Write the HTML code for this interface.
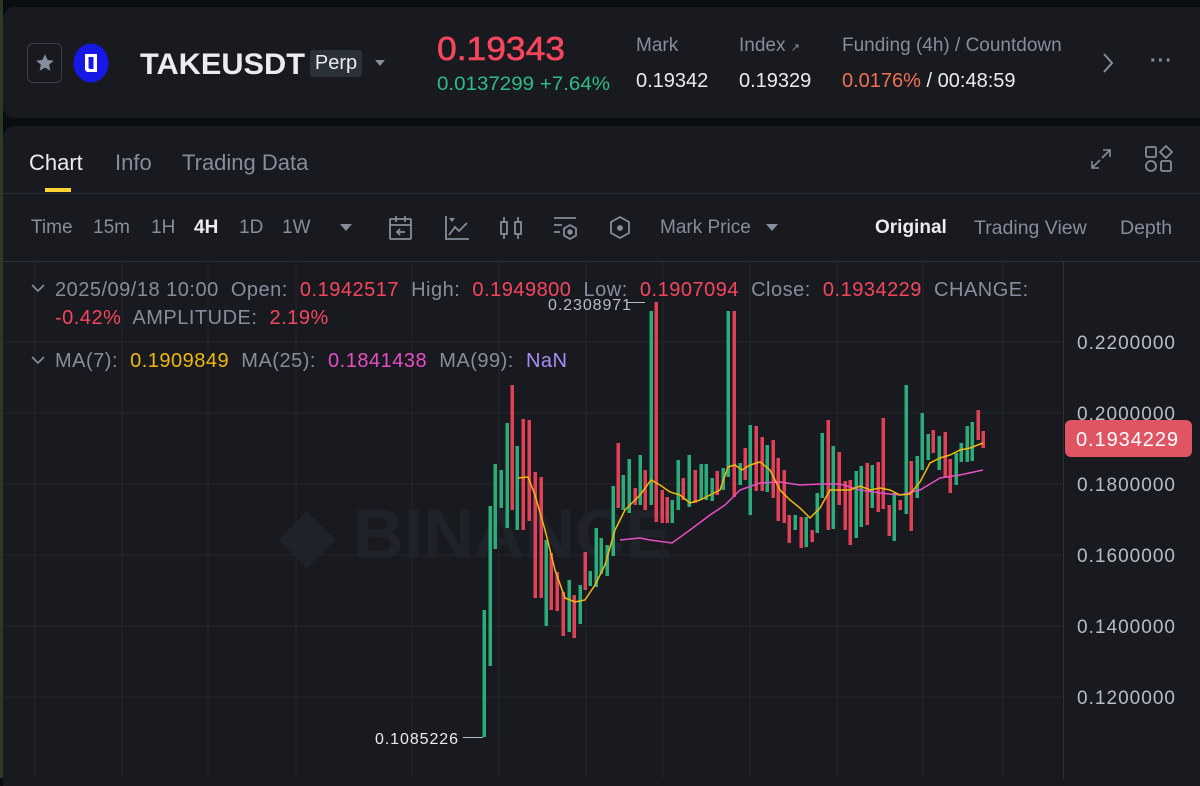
<!DOCTYPE html>
<html><head><meta charset="utf-8">
<style>
*{margin:0;padding:0;box-sizing:border-box}
body{width:1200px;height:778px;background:#0b0e11;font-family:"Liberation Sans",sans-serif;overflow:hidden;position:relative;color:#eaecef}
.p{position:absolute;white-space:nowrap}
.g{color:#848e9c}
.r{color:#f6465d}
.gr{color:#2ebd85}
.ln{font-size:20px;letter-spacing:0.5px}
</style></head><body>
<div class="p" style="left:0;top:0;width:3px;height:778px;background:#2a3a25"></div>
<div class="p" style="left:3px;top:7px;width:1197px;height:111px;background:#181a20;border-radius:12px 0 0 12px"></div>
<div class="p" style="left:3px;top:126px;width:1197px;height:660px;background:#181a20;border-radius:12px 0 0 0"></div>

<!-- header -->
<div class="p" style="left:27px;top:43px;width:35px;height:40px;border:1.5px solid #3a3f48;border-radius:6px"></div>
<svg class="p" style="left:34px;top:52px" width="22" height="22" viewBox="0 0 24 24"><path d="M12 2.5l2.9 6.2 6.6.7-5 4.5 1.4 6.6L12 17.1l-5.9 3.4 1.4-6.6-5-4.5 6.6-.7z" fill="#848e9c"/></svg>
<svg class="p" style="left:73px;top:43px" width="36" height="40" viewBox="0 0 36 40"><ellipse cx="18" cy="20" rx="17.5" ry="19.5" fill="#1717e6"/><path d="M12 11h12v18H14l-2-2z" fill="#fff"/><path d="M15.5 14h5v12h-4l-1-1z" fill="#1717e6"/></svg>
<svg class="p" style="left:0;top:0" width="700" height="110">
<text x="140" y="74" font-size="30" font-weight="bold" fill="#eaecef" textLength="165" lengthAdjust="spacingAndGlyphs" font-family="Liberation Sans,sans-serif">TAKEUSDT</text>
<text x="437" y="60" font-size="33" fill="#f6465d" stroke="#f6465d" stroke-width="0.6" textLength="128" lengthAdjust="spacingAndGlyphs" font-family="Liberation Sans,sans-serif">0.19343</text>
<text x="437" y="90" font-size="19" fill="#2ebd85" textLength="173" lengthAdjust="spacingAndGlyphs" font-family="Liberation Sans,sans-serif">0.0137299 +7.64%</text>
</svg>
<div class="p" style="left:310px;top:50px;width:52px;height:27px;background:#2b3139;border-radius:3px;font-size:20px;color:#eaecef;text-align:center;line-height:27px">Perp</div>
<svg class="p" style="left:374px;top:59px" width="12" height="8"><path d="M1 1h10L6 7z" fill="#848e9c"/></svg>
<div class="p g" style="left:636px;top:35px;font-size:19px">Mark</div>
<div class="p" style="left:636px;top:70px;font-size:20px">0.19342</div>
<div class="p g" style="left:739px;top:35px;font-size:19px">Index <span style="font-size:11px">↗</span></div>
<div class="p" style="left:739px;top:70px;font-size:20px">0.19329</div>
<div class="p g" style="left:842px;top:35px;font-size:19px;width:236px;overflow:hidden">Funding (4h) / Countdown</div>
<div class="p" style="left:842px;top:70px;font-size:20px"><span style="color:#f0714f">0.0176%</span> / 00:48:59</div>
<svg class="p" style="left:1100px;top:52px" width="16" height="22"><path d="M4 2l8 9-8 9" stroke="#848e9c" stroke-width="2" fill="none"/></svg>
<div class="p g" style="left:1150px;top:50px;font-size:20px;letter-spacing:1px;font-weight:bold">···</div>

<!-- tabs -->
<div class="p" style="left:29px;top:150px;font-size:22px;color:#eaecef">Chart</div>
<div class="p g" style="left:115px;top:150px;font-size:22px">Info</div>
<div class="p g" style="left:182px;top:150px;font-size:22px">Trading Data</div>
<div class="p" style="left:45px;top:188px;width:26px;height:4px;background:#fcd535"></div>
<div class="p" style="left:3px;top:193px;width:1197px;height:1px;background:#2b3139"></div>
<svg class="p" style="left:1088px;top:145px" width="26" height="28" viewBox="0 0 26 28"><path d="M15 5h7v7M22 5l-8 8M4 23l8-8M4 16v7h7" stroke="#848e9c" stroke-width="1.6" fill="none"/></svg>
<svg class="p" style="left:1144px;top:144px" width="30" height="30" viewBox="0 0 30 30"><rect x="2" y="3" width="10" height="10" rx="1.5" stroke="#848e9c" stroke-width="1.8" fill="none"/><path d="M22 2l6 6-6 6-6-6z" stroke="#848e9c" stroke-width="1.8" fill="none"/><circle cx="7" cy="22" r="5" stroke="#848e9c" stroke-width="1.8" fill="none"/><rect x="17" y="17" width="10" height="10" rx="1.5" stroke="#848e9c" stroke-width="1.8" fill="none"/></svg>

<!-- toolbar -->
<div class="p g" style="left:31px;top:217px;font-size:19px">Time</div>
<div class="p g" style="left:93px;top:217px;font-size:19px">15m</div>
<div class="p g" style="left:151px;top:217px;font-size:19px">1H</div>
<div class="p" style="left:194px;top:217px;font-size:19px;color:#eaecef;font-weight:bold">4H</div>
<div class="p g" style="left:239px;top:217px;font-size:19px">1D</div>
<div class="p g" style="left:282px;top:217px;font-size:19px">1W</div>
<svg class="p" style="left:339px;top:223px" width="14" height="10"><path d="M1 1h12L7 8z" fill="#848e9c"/></svg>
<svg class="p" style="left:388px;top:214px" width="26" height="28" viewBox="0 0 26 28" fill="none" stroke="#848e9c" stroke-width="1.8"><rect x="2" y="5" width="21" height="20" rx="1"/><path d="M2 11h21M8 2v6M17 2v6M17 18h-8M12 15l-3 3 3 3"/></svg>
<svg class="p" style="left:443px;top:214px" width="28" height="28" viewBox="0 0 28 28" fill="none" stroke="#848e9c" stroke-width="1.8"><path d="M3 2v23h23M6 21l6-8 4 4 8-8"/><path d="M6 4l3 4 3-4z" fill="#848e9c" stroke="none"/></svg>
<svg class="p" style="left:498px;top:214px" width="26" height="28" viewBox="0 0 26 28" fill="none" stroke="#848e9c" stroke-width="1.8"><rect x="3" y="8" width="6" height="12"/><path d="M6 3v5M6 20v5M20 3v5M20 20v5"/><rect x="17" y="8" width="6" height="12"/></svg>
<svg class="p" style="left:551px;top:214px" width="28" height="28" viewBox="0 0 28 28" fill="none" stroke="#848e9c" stroke-width="1.8"><path d="M3 4h22M3 11h8M3 18h6"/><path d="M19 11l6 3.5v7L19 25l-6-3.5v-7z"/><circle cx="19" cy="18" r="1.8" fill="#848e9c"/></svg>
<svg class="p" style="left:607px;top:214px" width="26" height="28" viewBox="0 0 26 28" fill="none" stroke="#848e9c" stroke-width="1.8"><path d="M13 3l9 5v11l-9 5-9-5V8z"/><circle cx="13" cy="14" r="2" fill="#848e9c"/></svg>
<div class="p g" style="left:660px;top:217px;font-size:19px">Mark Price</div>
<svg class="p" style="left:765px;top:223px" width="14" height="10"><path d="M1 1h12L7 8z" fill="#848e9c"/></svg>
<div class="p" style="left:875px;top:217px;font-size:19px;color:#eaecef;font-weight:bold">Original</div>
<div class="p g" style="left:974px;top:217px;font-size:19.5px">Trading View</div>
<div class="p g" style="left:1120px;top:217px;font-size:19.5px">Depth</div>
<div class="p" style="left:3px;top:261px;width:1197px;height:1px;background:#2b3139"></div>

<!-- chart -->
<svg class="p" style="left:0;top:262px" width="1200" height="516" id="ch">
<g stroke="#23262d" stroke-width="1">
<path d="M35 0v516M122 0v516M208 0v516M296 0v516M412 0v516M499 0v516M586 0v516M663 0v516M750 0v516M837 0v516M923 0v516M1003 0v516"/>
<path d="M3 80h1060M3 151h1060M3 222h1060M3 293h1060M3 364h1060M3 435h1060"/>
</g>
<path d="M1063.5 0v516" stroke="#2b3139"/>
<text x="280" y="296" font-size="70" font-weight="bold" fill="#1f2228" font-family="Liberation Sans,sans-serif">◆ BINANCE</text>
<g id="cd"></g>
<polyline fill="none" stroke="#e84ec2" stroke-width="1.5" points="620,278 640,276 650,278 672,281 690,268 710,253 725,243 740,228 760,221 780,220 800,223 820,222 840,222 860,228 880,231 900,233 920,228 940,216 960,213 983,208"/>
<polyline fill="none" stroke="#f0b90b" stroke-width="1.5" points="518,216 528,215 535,233 545,268 555,308 565,336 575,340 585,338 595,323 605,303 615,268 625,248 640,233 651,218 660,223 670,230 680,233 690,241 700,238 710,233 720,228 728,205 735,203 742,208 750,203 760,200 770,208 780,228 790,238 800,246 810,256 820,246 830,228 840,228 850,228 860,224 870,228 880,226 890,228 900,233 910,232 920,220 930,201 940,196 950,193 960,188 970,186 983,181"/>
<path d="M463 475.5h20M627 40.5h18" stroke="#b7bdc6" stroke-width="1"/>
<text x="375" y="482" font-size="16" fill="#eaecef" textLength="83" font-family="Liberation Sans,sans-serif">0.1085226</text>
<text x="548" y="48" font-size="16" fill="#b7bdc6" textLength="83" font-family="Liberation Sans,sans-serif">0.2308971</text>
<g font-size="19" fill="#b7bdc6" font-family="Liberation Sans,sans-serif">
<text x="1077" y="87" textLength="98">0.2200000</text><text x="1077" y="158" textLength="98">0.2000000</text><text x="1077" y="229" textLength="98">0.1800000</text><text x="1077" y="300" textLength="98">0.1600000</text><text x="1077" y="371" textLength="98">0.1400000</text><text x="1077" y="442" textLength="98">0.1200000</text>
</g>
<rect x="1065" y="158" width="127" height="37" rx="6" fill="#e05563"/>
<text x="1076" y="184" font-size="20" fill="#fff" textLength="102" font-family="Liberation Sans,sans-serif">0.1934229</text>
</svg>

<svg class="p" style="left:31px;top:283px" width="14" height="10"><path d="M1 2l6 6 6-6" stroke="#848e9c" stroke-width="1.6" fill="none"/></svg>
<div class="p ln" style="left:55px;top:279px"><span class="g">2025/09/18 10:00&nbsp; Open:&nbsp; </span><span class="r">0.1942517</span><span class="g">&nbsp; High:&nbsp; </span><span class="r">0.1949800</span><span class="g">&nbsp; Low:&nbsp; </span><span class="r">0.1907094</span><span class="g">&nbsp; Close:&nbsp; </span><span class="r">0.1934229</span><span class="g">&nbsp; CHANGE:</span></div>
<div class="p ln" style="left:55px;top:307px"><span class="r">-0.42%</span><span class="g">&nbsp; AMPLITUDE:&nbsp; </span><span class="r">2.19%</span></div>
<svg class="p" style="left:31px;top:355px" width="14" height="10"><path d="M1 2l6 6 6-6" stroke="#848e9c" stroke-width="1.6" fill="none"/></svg>
<div class="p ln" style="left:55px;top:350px"><span class="g">MA(7):&nbsp; </span><span style="color:#f0b90b">0.1909849</span><span class="g">&nbsp; MA(25):&nbsp; </span><span style="color:#e84ec2">0.1841438</span><span class="g">&nbsp; MA(99):&nbsp; </span><span style="color:#a98df5">NaN</span></div>

<script>
var c=[[484,610,737,1],[490,506,666,1],[495,464,549,1],[501,470,508,1],[507,423,528,1],[512,385,510,0],[517,446,530,1],[523,419,530,0],[529,420,521,0],[535,472,598,0],[541,477,598,0],[546,540,626,1],[551,553,610,0],[557,572,611,0],[563,592,636,0],[569,580,632,1],[574,595,638,0],[580,585,624,1],[585,552,590,0],[590,571,586,1],[596,528,587,1],[601,538,574,1],[607,545,576,1],[613,486,556,1],[618,443,508,0],[623,475,510,1],[629,459,513,1],[635,488,505,0],[640,455,505,1],[645,470,510,0],[651,311,505,1],[656,302,522,0],[662,490,523,0],[667,497,523,0],[672,500,523,1],[678,460,510,1],[683,478,500,0],[689,455,507,1],[695,470,503,0],[701,464,500,1],[706,464,500,1],[712,478,501,1],[717,471,495,0],[723,468,490,1],[728,311,477,1],[734,311,497,0],[740,463,485,1],[745,448,480,0],[750,425,515,1],[756,426,491,0],[762,437,491,0],[767,445,492,1],[773,440,498,0],[778,458,521,0],[784,470,523,0],[789,515,543,0],[795,515,530,1],[801,517,548,0],[806,517,547,1],[812,530,542,0],[817,493,533,1],[822,433,498,1],[828,420,530,0],[833,446,529,1],[839,452,505,0],[845,481,530,0],[850,480,545,0],[856,471,538,1],[861,466,527,1],[867,463,525,0],[872,465,508,1],[878,462,512,0],[883,418,509,0],[889,505,536,0],[894,493,541,1],[900,500,510,0],[906,385,514,1],[911,461,531,0],[917,456,498,1],[922,413,470,1],[928,434,460,1],[933,430,453,0],[939,436,470,1],[945,432,477,0],[950,459,493,0],[956,453,485,1],[961,443,462,1],[967,426,462,1],[972,422,461,1],[978,410,440,0],[983,431,448,0]];
var s='';c.forEach(function(d){s+='<rect x="'+(d[0]-1.5)+'" y="'+(d[1]-262)+'" width="3.5" height="'+(d[2]-d[1])+'" fill="'+(d[3]?'#2ebd85':'#f6465d')+'" opacity="0.9"/>';});
document.getElementById('cd').innerHTML=s;
</script>
</body></html>
